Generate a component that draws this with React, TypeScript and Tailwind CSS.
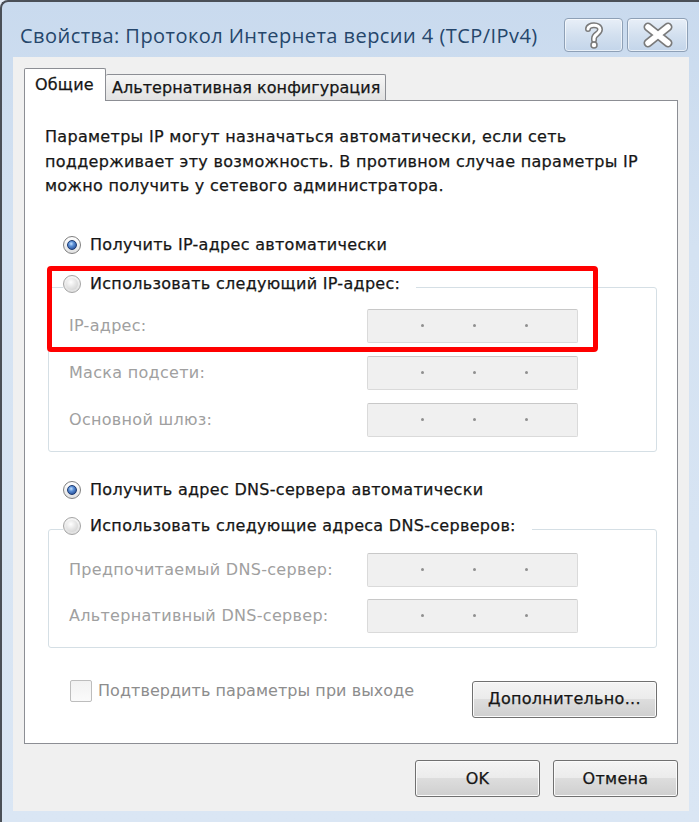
import React from "react";

const body = "font-['DejaVu_Sans','Liberation_Sans',sans-serif]";
const ink = "text-[#161616] [-webkit-text-stroke:0.25px_#161616]";

function Radio({ checked }: { checked?: boolean }) {
  if (checked) {
    return (
      <span className="relative flex h-[18px] w-[18px] shrink-0 items-center justify-center rounded-full border border-[#7f7f7f] bg-[linear-gradient(to_bottom,#ffffff,#e2e2e2)]">
        <span className="h-[10px] w-[10px] rounded-full border border-[#1c3a72] bg-[radial-gradient(circle_at_40%_35%,#c4e0ff_0%,#5a8fd6_35%,#183a82_100%)]" />
      </span>
    );
  }
  return (
    <span className="flex h-[18px] w-[18px] shrink-0 items-center justify-center rounded-full border border-[#a4a4a4] bg-[linear-gradient(to_bottom,#f6f6f6,#e0e0e0)]">
      <span className="h-[12px] w-[12px] rounded-full bg-[radial-gradient(circle_at_40%_35%,#ffffff_0%,#e4e4e4_50%,#cccccc_100%)]" />
    </span>
  );
}

function IpInput() {
  return (
    <div className="flex h-[34px] w-[211px] shrink-0 items-center rounded-[2px] border border-[#dadada] border-t-[#c8c8c8] bg-[#f0f0f0] pl-[4px]">
      <span className="flex-1" />
      <span className="h-[3px] w-[3px] rounded-full bg-[#8f8f8f]" />
      <span className="flex-1" />
      <span className="h-[3px] w-[3px] rounded-full bg-[#8f8f8f]" />
      <span className="flex-1" />
      <span className="h-[3px] w-[3px] rounded-full bg-[#8f8f8f]" />
      <span className="flex-1" />
    </div>
  );
}

function Row({ label, className = "" }: { label: string; className?: string }) {
  return (
    <div className={`flex h-[34px] items-center ${className}`}>
      <span className="w-[298px] text-[16px] tracking-[0.3px] text-[#a0a0a0]">{label}</span>
      <IpInput />
    </div>
  );
}

function WinButton({ children, className = "" }: { children: React.ReactNode; className?: string }) {
  return (
    <div
      className={`flex h-[37px] items-center justify-center rounded-[3px] border border-[#707070] bg-[linear-gradient(to_bottom,#f4f4f4_0%,#ebebeb_50%,#dddddd_50%,#cfcfcf_100%)] text-[16px] tracking-[0.3px] shadow-[inset_0_0_0_1px_#fbfbfb] ${ink} ${className}`}
    >
      {children}
    </div>
  );
}

export default function App() {
  return (
    <div className={`relative h-[822px] w-[699px] overflow-hidden bg-[#e4ecf6] ${body}`}>
      {/* window frame */}
      <div className="flex h-full w-full flex-col rounded-tl-[8px] border-l-[2px] border-t-[2px] border-[#4a4f57] bg-[linear-gradient(to_bottom,#c9daee_0%,#d4e2f2_30%,#dae6f4_100%)]">
        {/* title bar */}
        <div className="flex h-[55px] shrink-0 items-start">
          <div className="pl-[18px] pt-[20px] font-['Open_Sans',sans-serif] text-[20px] leading-[28px] tracking-[0.45px] text-[#25466b]">
            Свойства: Протокол Интернета версии 4 (TCP/IPv4)
          </div>
          <div className="ml-auto mr-[11px] mt-[16px] flex gap-[4px]">
            <div className="flex h-[34px] w-[59px] items-center justify-center rounded-[4px] border border-[#8ea0b6] bg-[linear-gradient(to_bottom,#e8eff8_0%,#d3e0ef_50%,#c3d5ea_100%)] shadow-[inset_0_0_0_1px_rgba(255,255,255,0.6)]">
              <svg width="22" height="28" viewBox="0 0 22 28">
                <path d="M5 8 C5 3 17 3 17 8.5 C17 13 11 13 11 17.5 V19" fill="none" stroke="#7a7a7a" strokeWidth="6" strokeLinecap="round" />
                <path d="M5 8 C5 3 17 3 17 8.5 C17 13 11 13 11 17.5 V19" fill="none" stroke="#ffffff" strokeWidth="3" strokeLinecap="round" />
                <circle cx="11" cy="24" r="3" fill="#ffffff" stroke="#7a7a7a" strokeWidth="1.5" />
              </svg>
            </div>
            <div className="flex h-[34px] w-[61px] items-center justify-center rounded-[4px] border border-[#8ea0b6] bg-[linear-gradient(to_bottom,#e8eff8_0%,#d3e0ef_50%,#c3d5ea_100%)] shadow-[inset_0_0_0_1px_rgba(255,255,255,0.6)]">
              <svg width="32" height="26" viewBox="0 0 32 26">
                <path d="M6 5 L26 21 M26 5 L6 21" fill="none" stroke="#7a7a7a" strokeWidth="9" strokeLinecap="round" />
                <path d="M6 5 L26 21 M26 5 L6 21" fill="none" stroke="#ffffff" strokeWidth="5.5" strokeLinecap="round" />
              </svg>
            </div>
          </div>
        </div>

        {/* client area */}
        <div className="ml-[11px] mr-[10px] flex h-[754px] shrink-0 flex-col bg-[#f0f0f0] px-[11px] pt-[11px]">
          {/* tabs */}
          <div className="flex h-[32px] items-end">
            <div className={`relative z-10 -mb-px flex h-[33px] w-[82px] items-start rounded-t-[2px] border border-b-0 border-[#8c8e94] bg-white pl-[10px] pt-[4px] text-[16px] tracking-[0.2px] ${ink}`}>
              Общие
            </div>
            <div className={`flex h-[26px] w-[280px] items-start rounded-t-[2px] border border-b-0 border-l-0 border-[#8c8e94] bg-[linear-gradient(to_bottom,#f6f6f6,#e2e2e2)] pl-[6px] pt-[1px] text-[16px] tracking-[0.05px] ${ink}`}>
              Альтернативная конфигурация
            </div>
          </div>

          {/* panel */}
          <div className="flex h-[644px] flex-col border border-[#8c8e94] bg-white pl-[20px] pr-[20px] pt-[24px]">
            <p className={`text-[16px] leading-[24.5px] tracking-[0.3px] ${ink}`}>
              Параметры IP могут назначаться автоматически, если сеть
              <br />
              поддерживает эту возможность. В противном случае параметры IP
              <br />
              можно получить у сетевого администратора.
            </p>

            <div className={`ml-[18px] mt-[34px] flex h-[24px] items-center gap-[9px] text-[16px] tracking-[0.3px] ${ink}`}>
              <Radio checked />
              <span>Получить IP-адрес автоматически</span>
            </div>

            {/* group 1 */}
            <div className="ml-[3px] mt-[30px] flex flex-col rounded-[3px] border border-[#d5dfe5] pb-[14px] pl-[20px]">
              <div className={`-ml-[6px] -mt-[16px] flex h-[24px] w-fit items-center gap-[9px] bg-white pr-[16px] text-[16px] tracking-[0.3px] ${ink}`}>
                <Radio />
                <span>Использовать следующий IP-адрес:</span>
              </div>
              <Row label="IP-адрес:" className="mt-[13px]" />
              <Row label="Маска подсети:" className="mt-[13px]" />
              <Row label="Основной шлюз:" className="mt-[13px]" />
            </div>

            <div className={`ml-[18px] mt-[26px] flex h-[24px] items-center gap-[9px] text-[16px] tracking-[0.3px] ${ink}`}>
              <Radio checked />
              <span>Получить адрес DNS-сервера автоматически</span>
            </div>

            {/* group 2 */}
            <div className="ml-[3px] mt-[27px] flex flex-col rounded-[3px] border border-[#d5dfe5] pb-[14px] pl-[20px]">
              <div className={`-ml-[6px] -mt-[16px] flex h-[24px] w-fit items-center gap-[9px] bg-white pr-[16px] text-[16px] tracking-[0.3px] ${ink}`}>
                <Radio />
                <span>Использовать следующие адреса DNS-серверов:</span>
              </div>
              <Row label="Предпочитаемый DNS-сервер:" className="mt-[15px]" />
              <Row label="Альтернативный DNS-сервер:" className="mt-[12px]" />
            </div>

            {/* bottom row */}
            <div className="ml-[3px] mt-[32px] flex items-start">
              <div className="ml-[22px] flex h-[22px] items-center gap-[6px]">
                <span className="h-[22px] w-[22px] rounded-[2px] border border-[#bdbdbd] bg-[linear-gradient(to_bottom,#f2f2f2,#fafafa)]" />
                <span className="text-[16px] tracking-[0.05px] text-[#8d8d8d]">Подтвердить параметры при выходе</span>
              </div>
              <WinButton className="ml-auto mt-px w-[185px]">Дополнительно...</WinButton>
            </div>
          </div>

          {/* OK / Cancel */}
          <div className="mt-[16px] flex justify-end gap-[13px]">
            <WinButton className="w-[125px]">OK</WinButton>
            <WinButton className="w-[125px]">Отмена</WinButton>
          </div>
        </div>
      </div>

      {/* red highlight */}
      <div className="absolute left-[47px] top-[266px] h-[86px] w-[551px] rounded-[4px] border-[5px] border-[#ff0000]" />
    </div>
  );
}
